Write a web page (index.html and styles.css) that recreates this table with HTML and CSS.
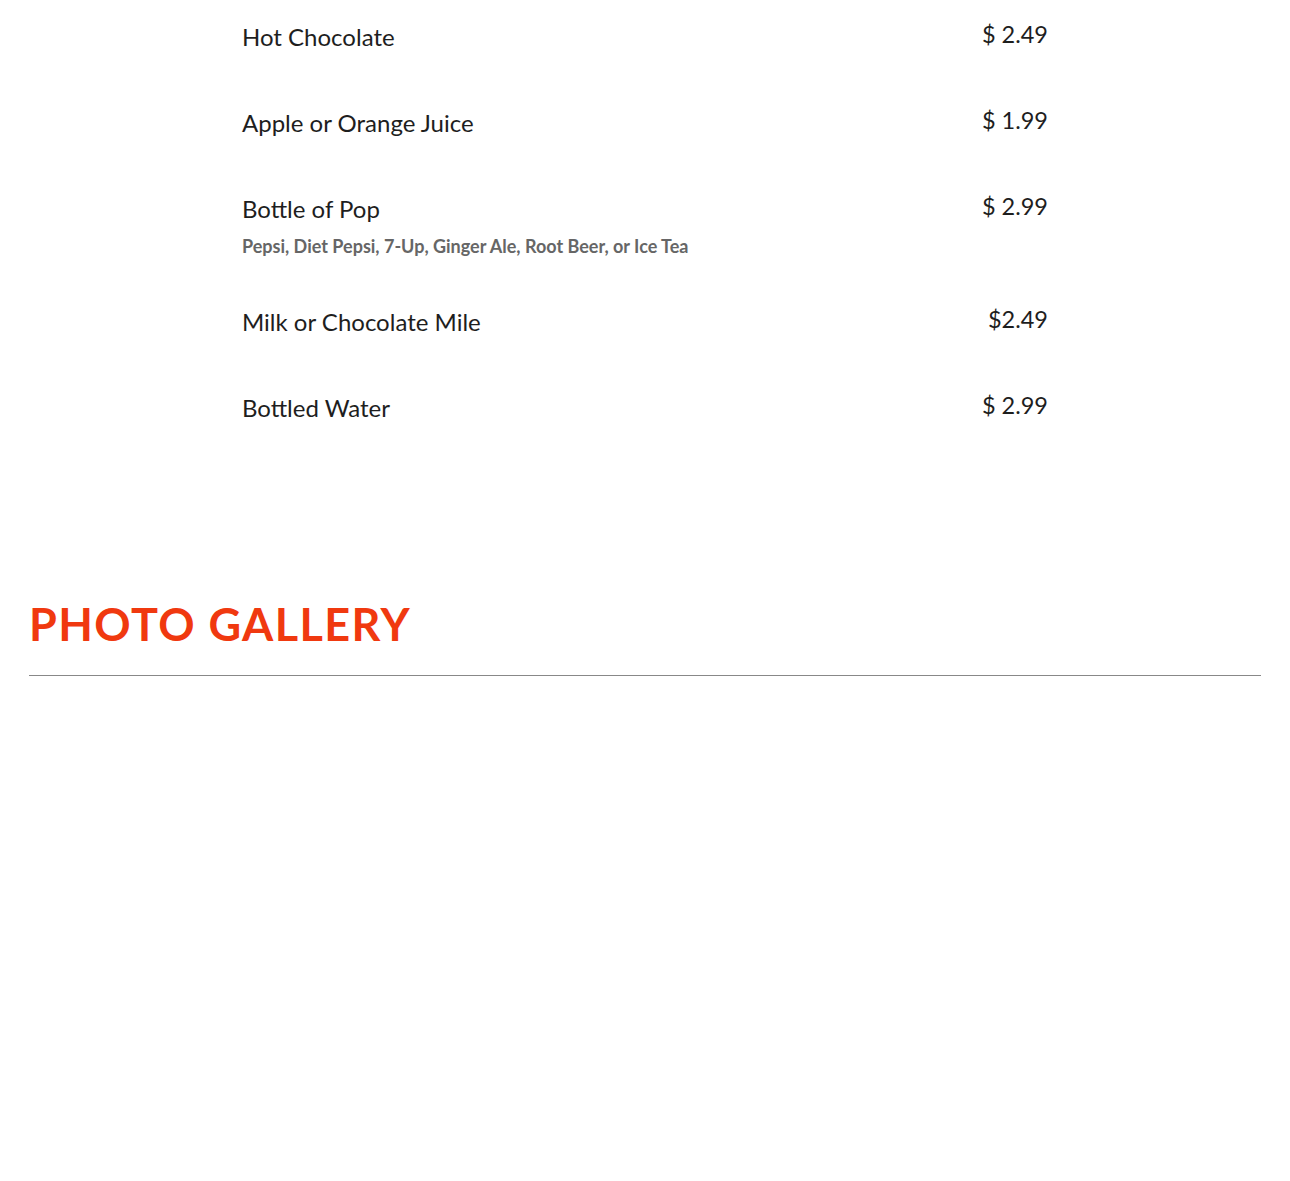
FILE: index.html
```html
<!DOCTYPE html>
<html lang="en">
<head>
    <meta charset="UTF-8">
    <meta name="viewport" content="width=device-width, initial-scale=1.0">
    <title>Menu - Drinks</title>
    <link rel="stylesheet" href="styles.css">
</head>
<body>

    <div class="menu">
        <div class="menuItem">
            <div class="itemText">
                <h3 class="itemName">Hot Chocolate</h3>
            </div>
            <span class="itemPrice">$ 2.49</span>
        </div>

        <div class="menuItem">
            <div class="itemText">
                <h3 class="itemName">Apple or Orange Juice</h3>
            </div>
            <span class="itemPrice">$ 1.99</span>
        </div>

        <div class="menuItem withDesc">
            <div class="itemText">
                <h3 class="itemName">Bottle of Pop</h3>
                <p class="itemDesc">Pepsi, Diet Pepsi, 7-Up, Ginger Ale, Root Beer, or Ice Tea</p>
            </div>
            <span class="itemPrice">$ 2.99</span>
        </div>

        <div class="menuItem">
            <div class="itemText">
                <h3 class="itemName">Milk or Chocolate Mile</h3>
            </div>
            <span class="itemPrice">$2.49</span>
        </div>

        <div class="menuItem">
            <div class="itemText">
                <h3 class="itemName">Bottled Water</h3>
            </div>
            <span class="itemPrice">$ 2.99</span>
        </div>
    </div>

    <!-- Gallery -->
    <div id="gallery">
        <h2 class="sectionTitle">PHOTO GALLERY</h2>
        <hr class="sectionLine">
    </div>

</body>
</html>
```

FILE: styles.css
```css
body {
    font-family: Lato, "Open Sans", sans-serif;
    margin: 0;
    background-color: #ffffff;
    color: #1e1e1e;
}

.menu {
    width: 806px;
    margin: 0 auto;
    padding-top: 21px;
}

.menuItem {
    display: flex;
    justify-content: space-between;
    align-items: flex-start;
    margin-bottom: 54px;
}

.withDesc {
    margin-bottom: 48px;
}

.itemName {
    font-size: 24px;
    font-weight: 400;
    line-height: 32px;
    margin: 0;
}

.itemDesc {
    font-size: 18px;
    font-weight: 700;
    color: #666666;
    line-height: 24px;
    margin: 9px 0 0 0;
}

.itemPrice {
    font-size: 23.5px;
    line-height: 26px;
}

#gallery {
    width: 1232px;
    margin: 170px auto 0 auto;
}

.sectionTitle {
    font-size: 45px;
    font-weight: 700;
    letter-spacing: 1.4px;
    color: #f0390f;
    line-height: 60px;
    margin: 0;
}

.sectionLine {
    border: none;
    border-top: 1px solid #888888;
    margin: 21px 0 0 0;
}
```
